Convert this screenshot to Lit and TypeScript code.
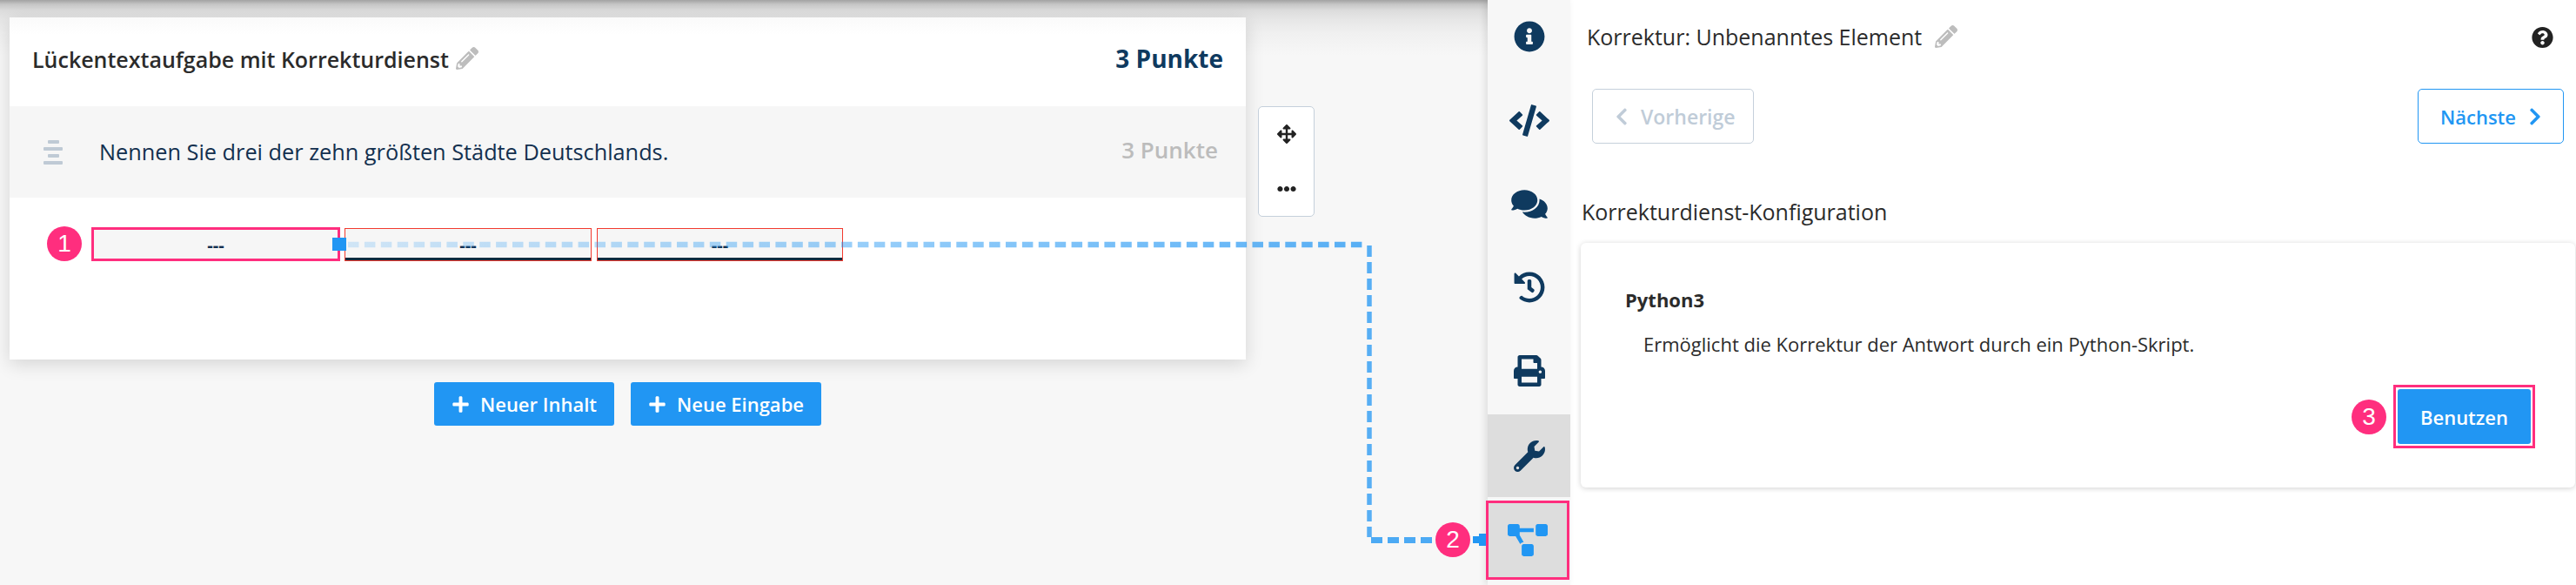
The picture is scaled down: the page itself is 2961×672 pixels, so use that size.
import { LitElement, html, css, svg } from "lit";
import { customElement } from "lit/decorators.js";

const P = {
  pencil: "M497.9 142.1l-46.1 46.1c-4.7 4.7-12.3 4.7-17 0l-111-111c-4.7-4.7-4.7-12.3 0-17l46.1-46.1c18.7-18.7 49.1-18.7 67.9 0l60.1 60.1c18.8 18.7 18.8 49.1 0 67.9zM284.2 99.8L21.6 362.4.4 483.9c-2.9 16.4 11.4 30.6 27.8 27.8l121.5-21.3 262.6-262.6c4.7-4.7 4.7-12.3 0-17l-111-111c-4.8-4.7-12.4-4.7-17.1 0zM124.1 339.9c-5.5-5.5-5.5-14.3 0-19.8l154-154c5.5-5.5 14.3-5.5 19.8 0s5.5 14.3 0 19.8l-154 154c-5.5 5.5-14.3 5.5-19.8 0zM88 424h48v36.3l-64.5 11.3-31.1-31.1L51.7 376H88v48z",
  info: "M256 8C119.043 8 8 119.083 8 256c0 136.997 111.043 248 248 248s248-111.003 248-248C504 119.083 392.957 8 256 8zm0 110c23.196 0 42 18.804 42 42s-18.804 42-42 42-42-18.804-42-42 18.804-42 42-42zm56 254c0 6.627-5.373 12-12 12h-88c-6.627 0-12-5.373-12-12v-24c0-6.627 5.373-12 12-12h12v-64h-12c-6.627 0-12-5.373-12-12v-24c0-6.627 5.373-12 12-12h64c6.627 0 12 5.373 12 12v100h12c6.627 0 12 5.373 12 12v24z",
  code: "M278.9 511.5l-61-17.7c-6.4-1.8-10-8.5-8.2-14.9L346.2 8.7c1.8-6.4 8.5-10 14.9-8.2l61 17.7c6.4 1.8 10 8.5 8.2 14.9L293.8 503.3c-1.9 6.4-8.5 10.1-14.9 8.2zm-114-112.2l43.5-46.4c4.6-4.9 4.3-12.7-.8-17.2L117 256l90.6-79.7c5.1-4.5 5.5-12.3.8-17.2l-43.5-46.4c-4.5-4.8-12.1-5.1-17-.5L3.8 247.2c-5.1 4.7-5.1 12.8 0 17.5l144.1 135.1c4.9 4.6 12.5 4.4 17-.5zm327.2.6l144.1-135.1c5.1-4.7 5.1-12.8 0-17.5L492.1 112.1c-4.8-4.5-12.4-4.3-17 .5L431.6 159c-4.6 4.9-4.3 12.7.8 17.2L523 256l-90.6 79.7c-5.1 4.5-5.5 12.3-.8 17.2l43.5 46.4c4.5 4.9 12.1 5.1 17 .6z",
  comments: "M416 192c0-88.4-93.1-160-208-160S0 103.6 0 192c0 34.3 14.1 65.9 38 92-13.4 30.2-35.5 54.2-35.8 54.5-2.2 2.3-2.8 5.7-1.5 8.7S4.8 352 8 352c36.6 0 66.9-12.3 88.7-25 32.2 15.7 70.3 25 111.3 25 114.9 0 208-71.6 208-160zm122 220c23.9-26 38-57.7 38-92 0-66.9-53.5-124.2-129.3-148.1.9 6.6 1.3 13.3 1.3 20.1 0 105.9-107.7 192-240 192-10.8 0-21.3-.8-31.7-1.9C207.8 439.6 281.8 480 368 480c41 0 79.1-9.2 111.3-25 21.8 12.7 52.1 25 88.7 25 3.2 0 6.1-1.9 7.3-4.8 1.3-2.9.7-6.3-1.5-8.7-.3-.3-22.4-24.2-35.8-54.5z",
  history: "M504 255.531c.253 136.64-111.18 248.372-247.82 248.468-59.015.042-113.223-20.53-155.822-54.911-11.077-8.94-11.905-25.541-1.839-35.607l11.267-11.267c8.609-8.609 22.353-9.551 31.891-1.984C173.062 425.135 212.781 440 256 440c101.705 0 184-82.311 184-184 0-101.705-82.311-184-184-184-48.814 0-93.149 18.969-126.068 49.932l50.754 50.754c10.08 10.08 2.941 27.314-11.313 27.314H24c-8.837 0-16-7.163-16-16V38.627c0-14.254 17.234-21.393 27.314-11.314l49.372 49.372C129.209 34.136 189.552 8 256 8c136.81 0 247.747 110.78 248 247.531zm-180.912 78.784l9.823-12.63c8.138-10.463 6.253-25.542-4.21-33.679L288 256.349V152c0-13.255-10.745-24-24-24h-16c-13.255 0-24 10.745-24 24v135.651l65.409 50.874c10.463 8.137 25.541 6.253 33.679-4.21z",
  print: "M448 192V77.25c0-8.49-3.37-16.62-9.37-22.63L393.37 9.37c-6-6-14.14-9.37-22.63-9.37H96C78.33 0 64 14.33 64 32v160c-35.35 0-64 28.65-64 64v112c0 8.84 7.16 16 16 16h48v96c0 17.67 14.33 32 32 32h320c17.67 0 32-14.33 32-32v-96h48c8.84 0 16-7.16 16-16V256c0-35.35-28.65-64-64-64zm-64 256H128v-96h256v96zm0-224H128V64h192v48c0 8.84 7.16 16 16 16h48v96zm48 72c-13.25 0-24-10.75-24-24 0-13.26 10.75-24 24-24s24 10.74 24 24c0 13.25-10.75 24-24 24z",
  wrench: "M507.73 109.1c-2.24-9.03-13.54-12.09-20.12-5.51l-74.36 74.36-67.88-11.31-11.31-67.88 74.36-74.36c6.62-6.62 3.43-17.9-5.66-20.16-47.38-11.74-99.55.91-136.58 37.93-39.64 39.64-50.55 97.1-34.05 147.2L18.74 402.76c-24.99 24.99-24.99 65.51 0 90.5 24.99 24.99 65.51 24.99 90.5 0l213.21-213.21c50.12 16.71 107.47 5.68 147.37-34.22 37.07-37.07 49.7-89.32 37.91-136.73zM64 472c-13.25 0-24-10.75-24-24 0-13.26 10.75-24 24-24s24 10.74 24 24c0 13.25-10.75 24-24 24z",
  diagram: "M384 320H256c-17.67 0-32 14.33-32 32v128c0 17.67 14.33 32 32 32h128c17.67 0 32-14.33 32-32V352c0-17.67-14.33-32-32-32zM192 32c0-17.67-14.33-32-32-32H32C14.33 0 0 14.33 0 32v128c0 17.67 14.33 32 32 32h95.72l73.16 128.04C211.98 300.98 232.4 288 256 288h.28L192 175.51V128h224V64H192V32zM608 0H480c-17.67 0-32 14.33-32 32v128c0 17.67 14.33 32 32 32h128c17.67 0 32-14.33 32-32V32c0-17.67-14.33-32-32-32z",
  question: "M504 256c0 136.997-111.043 248-248 248S8 392.997 8 256C8 119.083 119.043 8 256 8s248 111.083 248 248zM262.655 90c-54.497 0-89.255 22.957-116.549 63.758-3.536 5.286-2.353 12.415 2.715 16.258l34.699 26.31c5.205 3.947 12.621 3.008 16.665-2.122 17.864-22.658 30.113-35.797 57.303-35.797 20.429 0 45.698 13.148 45.698 32.958 0 14.976-12.363 22.667-32.534 33.976C247.128 238.528 216 254.941 216 296v4c0 6.627 5.373 12 12 12h56c6.627 0 12-5.373 12-12v-1.333c0-28.462 83.186-29.647 83.186-106.667 0-58.002-60.165-102-116.531-102zM256 338c-25.365 0-46 20.635-46 46 0 25.364 20.635 46 46 46s46-20.636 46-46c0-25.365-20.635-46-46-46z",
  move: "M352.201 425.775l-79.196 79.196c-9.373 9.373-24.568 9.373-33.941 0l-79.196-79.196c-15.119-15.119-4.411-40.971 16.971-40.97h51.162L228 284H127.196v51.162c0 21.382-25.851 32.09-40.971 16.971L7.029 272.937c-9.373-9.373-9.373-24.569 0-33.941L86.225 159.8c15.119-15.119 40.971-4.411 40.971 16.971V228H228V127.196h-51.23c-21.382 0-32.09-25.851-16.971-40.971l79.196-79.196c9.373-9.373 24.568-9.373 33.941 0l79.196 79.196c15.119 15.119 4.411 40.971-16.971 40.971h-51.162V228h100.804v-51.162c0-21.382 25.851-32.09 40.97-16.971l79.196 79.196c9.373 9.373 9.373 24.569 0 33.941L425.773 352.2c-15.119 15.119-40.971 4.411-40.97-16.971V284H284v100.804h51.23c21.382 0 32.09 25.851 16.971 40.971z",
  plus: "M416 208H272V64c0-17.67-14.33-32-32-32h-32c-17.67 0-32 14.33-32 32v144H32c-17.67 0-32 14.33-32 32v32c0 17.67 14.33 32 32 32h144v144c0 17.67 14.33 32 32 32h32c17.67 0 32-14.33 32-32V304h144c17.67 0 32-14.33 32-32v-32c0-17.67-14.33-32-32-32z",
  left: "M34.52 239.03L228.87 44.69c9.37-9.37 24.57-9.37 33.94 0l22.67 22.67c9.36 9.36 9.37 24.52.04 33.9L131.49 256l154.02 154.75c9.34 9.38 9.32 24.54-.04 33.9l-22.67 22.67c-9.37 9.37-24.57 9.37-33.94 0L34.52 272.97c-9.37-9.37-9.37-24.57 0-33.94z",
  right: "M285.476 272.971L91.132 467.314c-9.373 9.373-24.569 9.373-33.941 0l-22.667-22.667c-9.357-9.357-9.375-24.522-.04-33.901L188.505 256 34.484 101.255c-9.335-9.379-9.317-24.544.04-33.901l22.667-22.667c9.373-9.373 24.569-9.373 33.941 0L285.475 239.03c9.373 9.372 9.373 24.568.001 33.941z",
  dots: "M328 256c0 39.8-32.2 72-72 72s-72-32.2-72-72 32.2-72 72-72 72 32.2 72 72zm104-72c-39.8 0-72 32.2-72 72s32.2 72 72 72 72-32.2 72-72-32.2-72-72-72zm-352 0c-39.8 0-72 32.2-72 72s32.2 72 72 72 72-32.2 72-72-32.2-72-72-72z",
};

const icon = (d: string, vb: string, cls: string) =>
  html`<svg class="ic ${cls}" viewBox="${vb}" preserveAspectRatio="xMidYMid meet"><path d="${d}"></path></svg>`;

@customElement("app-root")
export class AppRoot extends LitElement {
  static styles = css`
    :host { display: block; width: 2961px; height: 672px; overflow: hidden; position: relative;
      font-family: "Open Sans", "Noto Sans", sans-serif; color: #2b2b2b; background: #fff; }
    * { box-sizing: border-box; }
    .ic { display: block; fill: currentColor; flex: none; }
    .page { display: flex; width: 2961px; height: 672px; }

    .left { width: 1710px; height: 672px; padding: 20px 0 0 11px; display: flex; align-items: flex-start; overflow: hidden;
      background: linear-gradient(180deg, #a2a2a2 0, #c6c6c6 5px, #dcdcdc 12px, #e6e6e6 22px, #f0f0f0 38px, #f7f7f7 64px); }
    .col { width: 1421px; display: flex; flex-direction: column; }
    .card { height: 393px; background: linear-gradient(180deg, #fafafa 0, #fff 20px); box-shadow: 0 5px 20px rgba(0,0,0,.14); display: flex; flex-direction: column; }
    .chead { height: 102px; padding: 0 26px 0 26px; display: flex; align-items: center; justify-content: space-between; }
    .ctitle { display: flex; align-items: center; font-size: 25px; font-weight: 600; color: #2b2b2b; margin-top: -7px; }
    .pen { width: 26px; height: 26px; color: #bdbdbd; margin-left: 8px; margin-top: -2px; }
    .pts { font-size: 28px; font-weight: 700; color: #0f3a5f; margin-top: -8px; }
    .crow { height: 105px; background: #f6f6f6; display: flex; align-items: center; padding: 0 32px 0 39px; }
    .lines { width: 22px; display: flex; flex-direction: column; align-items: center; gap: 4px; }
    .lines i { display: block; height: 4px; background: #bfcad5; border-radius: 1px; }
    .lines i.s { width: 13px; }
    .lines i.w { width: 22px; }
    .qtext { font-size: 25.3px; color: #13304f; margin-left: 42px; flex: 1; margin-top: -2px; }
    .pts2 { font-size: 26px; font-weight: 600; color: #bcbcbc; margin-top: -6px; }
    .gaps { display: flex; align-items: flex-end; padding: 34px 0 0 94px; gap: 5px; }
    .gap { height: 38px; width: 284px; background: #f6f6f6; border: 1px solid #f23a2f; display: flex; align-items: center; justify-content: center;
      font-size: 20px; font-weight: 700; color: #13304f; position: relative; padding-top: 1px; }
    .gap::after { content: ""; position: absolute; left: 0; right: 0; bottom: 0; height: 3px; background: #0f2b3f; }
    .gap.first { height: 39px; width: 286px; border: 3px solid #ff2e7e; }
    .gap.first::after { display: none; }
    .gap.third { margin-left: 1px; width: 283px; }
    .actions { display: flex; justify-content: center; gap: 19px; margin-top: 26px; }
    .add { height: 50px; background: #2196f3; color: #fff; border-radius: 3px; display: flex; align-items: center; font-size: 22px; font-weight: 600; padding: 0 20px; }
    .add .plus { width: 21px; height: 21px; margin-right: 12px; }
    .tools { width: 65px; height: 127px; margin: 102px 0 0 14px; background: #fff; border: 1px solid #c5d0db; border-radius: 5px; display: flex; flex-direction: column; align-items: center; }
    .tools .cell { height: 63px; display: flex; align-items: center; justify-content: center; color: #222; }
    .tools .cell svg { width: 22px; height: 24px; }

    .side { width: 95px; height: 672px; background: #f7f7f7; box-shadow: -3px 0 8px rgba(0,0,0,.1); display: flex; flex-direction: column; position: relative; }
    .tab { height: 96px; display: flex; align-items: center; justify-content: center; color: #0f3a5f; flex: none; }
    .tab:first-child { margin-top: -6px; }
    .tab .lg { width: 36px; height: 36px; }
    .tab .wd { width: 46px; height: 37px; }
    .tab.on { height: 95px; background: #ddd; margin-top: 2px; }
    .tab.pick { height: 91px; width: 96px; margin: 4px 0 0 -2px; background: #ddd; border: 3px solid #ff2e7e; color: #2196f3; }

    .main { width: 1156px; height: 672px; display: flex; flex-direction: column; background: #fff; }
    .mhead { height: 86px; padding: 0 26px 0 19px; display: flex; align-items: center; }
    .mtitle { font-size: 25px; margin-top: -2px; }
    .mhead .pen { margin-left: 15px; margin-top: -2px; }
    .help { width: 25px; height: 26px; margin-left: auto; color: #222; }
    .nav { margin-top: 16px; height: 63px; padding: 0 14px 0 25px; display: flex; justify-content: space-between; }
    .nb { height: 63px; border: 1px solid; border-radius: 5px; display: flex; align-items: center; font-size: 22px; font-weight: 600; }
    .nb.prev { width: 186px; border-color: #c5d0db; color: #c0ccd8; padding-left: 26px; font-size: 23px; }
    .nb.next { width: 168px; border-color: #2196f3; color: #2196f3; padding-left: 25px; }
    .nb svg { width: 14px; height: 24px; }
    .nb.prev svg { margin-right: 15px; }
    .nb.next svg { margin-left: 15px; }
    .sec { margin-top: 58px; height: 40px; padding-left: 13px; display: flex; align-items: center; font-size: 25px; }
    .panel { margin: 16px 1px 0 12px; height: 281px; border-radius: 6px; background: #fff; box-shadow: 0 1px 6px rgba(0,0,0,.18); padding: 51px 46px 0 52px; display: flex; flex-direction: column; }
    .pname { height: 28px; line-height: 28px; font-size: 22px; font-weight: 700; margin-left: -1px; }
    .pdesc { height: 28px; line-height: 28px; font-size: 22px; margin: 23px 0 0 20px; }
    .pfoot { margin-top: 33px; display: flex; justify-content: flex-end; align-items: center; gap: 8px; }
    .hl { border: 3px solid #ff2e7e; padding: 2px; }
    .use { width: 153px; height: 63px; background: #2196f3; color: #fff; border-radius: 3px; display: flex; align-items: center; justify-content: center; font-size: 22px; font-weight: 600; }

    .badge { width: 40px; height: 40px; border-radius: 50%; background: #ff2e7e; color: #fff; display: flex; align-items: center; justify-content: center;
      font-family: "Liberation Sans", Arial, sans-serif; font-size: 28px; flex: none; }
    .over { position: absolute; left: 0; top: 0; width: 2961px; height: 672px; pointer-events: none; }
    .b1 { position: absolute; left: 54px; top: 260px; }
    .b2 { position: absolute; left: 1650px; top: 600px; }
  `;

  render() {
    return html`
      <div class="page">
        <section class="left">
          <div class="col">
            <div class="card">
              <div class="chead">
                <div class="ctitle">Lückentextaufgabe mit Korrekturdienst${icon(P.pencil, "0 0 512 512", "pen")}</div>
                <div class="pts">3 Punkte</div>
              </div>
              <div class="crow">
                <div class="lines"><i class="s"></i><i class="w"></i><i class="s"></i><i class="w"></i></div>
                <div class="qtext">Nennen Sie drei der zehn größten Städte Deutschlands.</div>
                <div class="pts2">3 Punkte</div>
              </div>
              <div class="gaps">
                <div class="gap first">---</div>
                <div class="gap">---</div>
                <div class="gap third">---</div>
              </div>
            </div>
            <div class="actions">
              <div class="add">${icon(P.plus, "0 0 448 512", "plus")}Neuer Inhalt</div>
              <div class="add">${icon(P.plus, "0 0 448 512", "plus")}Neue Eingabe</div>
            </div>
          </div>
          <div class="tools">
            <div class="cell">${icon(P.move, "0 0 512 512", "")}</div>
            <div class="cell">${icon(P.dots, "0 0 512 512", "")}</div>
          </div>
        </section>
        <nav class="side">
          <div class="tab">${icon(P.info, "0 0 512 512", "lg")}</div>
          <div class="tab">${icon(P.code, "0 0 640 512", "wd")}</div>
          <div class="tab">${icon(P.comments, "0 0 576 512", "wd")}</div>
          <div class="tab">${icon(P.history, "0 0 512 512", "lg")}</div>
          <div class="tab">${icon(P.print, "0 0 512 512", "lg")}</div>
          <div class="tab on">${icon(P.wrench, "0 0 512 512", "lg")}</div>
          <div class="tab pick">${icon(P.diagram, "0 0 640 512", "wd")}</div>
        </nav>
        <main class="main">
          <div class="mhead">
            <div class="mtitle">Korrektur: Unbenanntes Element</div>
            ${icon(P.pencil, "0 0 512 512", "pen")}
            ${icon(P.question, "0 0 512 512", "help")}
          </div>
          <div class="nav">
            <div class="nb prev">${icon(P.left, "0 0 320 512", "")}Vorherige</div>
            <div class="nb next">Nächste${icon(P.right, "0 0 320 512", "")}</div>
          </div>
          <div class="sec">Korrekturdienst-Konfiguration</div>
          <div class="panel">
            <div class="pname">Python3</div>
            <div class="pdesc">Ermöglicht die Korrektur der Antwort durch ein Python-Skript.</div>
            <div class="pfoot">
              <div class="badge">3</div>
              <div class="hl"><div class="use">Benutzen</div></div>
            </div>
          </div>
        </main>
      </div>
      <svg class="over" viewBox="0 0 2961 672">
        <defs>
          <linearGradient id="fade" gradientUnits="userSpaceOnUse" x1="398" y1="0" x2="1574" y2="0">
            <stop offset="0" stop-color="#2196f3" stop-opacity=".18"></stop>
            <stop offset="1" stop-color="#2196f3" stop-opacity=".75"></stop>
          </linearGradient>
        </defs>
        ${svg`
          <rect x="382" y="273" width="16" height="15" fill="#2196f3"></rect>
          <path d="M400 281 H1570" fill="none" stroke="url(#fade)" stroke-width="6.5" stroke-dasharray="12.5 6.4"></path>
          <path d="M1574 282 V617" fill="none" stroke="#2196f3" stroke-opacity=".75" stroke-width="5.5" stroke-dasharray="13 6"></path>
          <path d="M1576 620.5 H1650" fill="none" stroke="#2196f3" stroke-opacity=".8" stroke-width="7" stroke-dasharray="13 6"></path>
          <path d="M1693 616 H1700 V613 H1708 V627 H1700 V624 H1693 Z" fill="#2196f3"></path>
        `}
      </svg>
      <div class="badge b1">1</div>
      <div class="badge b2">2</div>
    `;
  }
}
